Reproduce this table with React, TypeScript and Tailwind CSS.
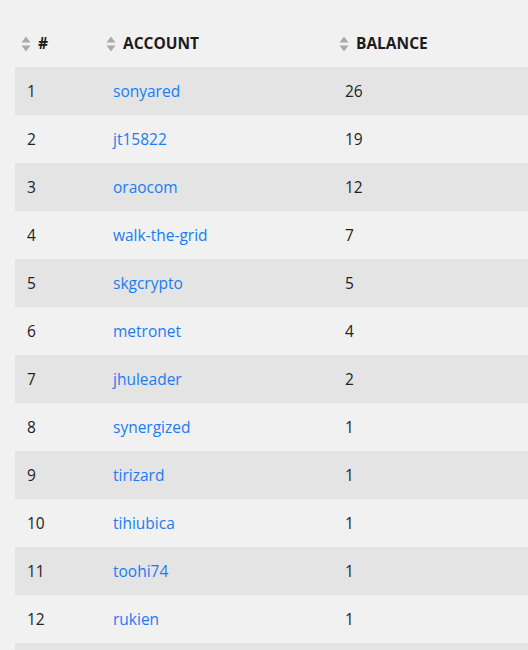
import React from 'react';

const ROWS: [number, string, number][] = [
  [1, 'sonyared', 26],
  [2, 'jt15822', 19],
  [3, 'oraocom', 12],
  [4, 'walk-the-grid', 7],
  [5, 'skgcrypto', 5],
  [6, 'metronet', 4],
  [7, 'jhuleader', 2],
  [8, 'synergized', 1],
  [9, 'tirizard', 1],
  [10, 'tihiubica', 1],
  [11, 'toohi74', 1],
  [12, 'rukien', 1],
];

const SortIcon = () => (
  <svg width="10" height="16" viewBox="0 0 10 16" className="shrink-0">
    <path d="M5 0.5 L9.5 6.5 L0.5 6.5 Z" fill="#aaaaaa" />
    <path d="M5 15.5 L9.5 9.5 L0.5 9.5 Z" fill="#aaaaaa" />
  </svg>
);

const App = () => {
  return (
    <div className="h-[650px] overflow-hidden w-full bg-[#f1f1f1] pl-[15px] pt-5 font-['Open_Sans',sans-serif] text-[15.5px] text-[#222]">
      <div className="grid grid-cols-[85px_233px_1fr] h-[47px] items-center font-bold text-[15.5px] text-[#1c1c1c]">
        <div className="flex items-center gap-[7px] pl-[6px]">
          <SortIcon />
          <span>#</span>
        </div>
        <div className="flex items-center gap-[7px] pl-[6px]">
          <SortIcon />
          <span>ACCOUNT</span>
        </div>
        <div className="flex items-center gap-[7px] pl-[6px]">
          <SortIcon />
          <span>BALANCE</span>
        </div>
      </div>
      {ROWS.map(([n, name, bal]) => (
        <div
          key={n}
          className={`grid grid-cols-[85px_233px_1fr] h-12 items-center pt-[2px] ${n % 2 === 1 ? 'bg-[#e4e4e4]' : 'bg-[#f1f1f1]'}`}
        >
          <div className="pl-3">{n}</div>
          <div className="pl-[13px] text-[#1a7cf2]">{name}</div>
          <div className="pl-3">{bal}</div>
        </div>
      ))}
      <div className="h-12 bg-[#e4e4e4]" />
    </div>
  );
};

export default App;
